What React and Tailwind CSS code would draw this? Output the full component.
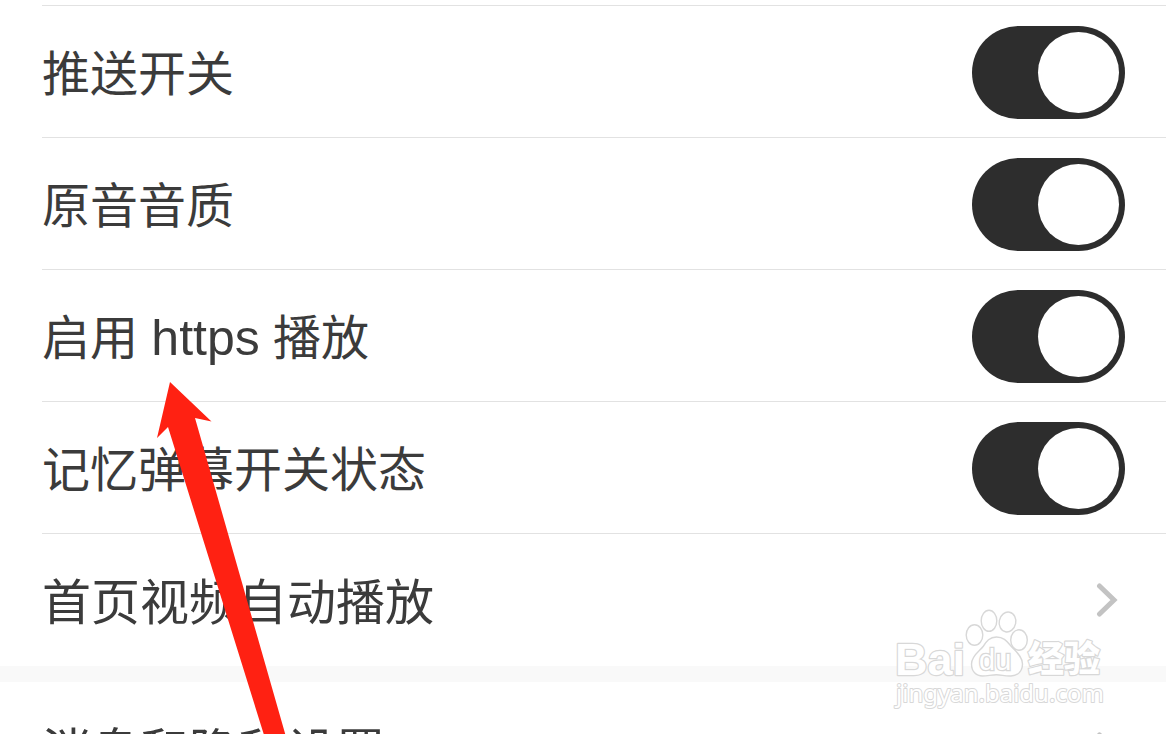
import { useState } from 'react';

const switches = [
  { id: 'push', label: '推送开关' },
  { id: 'quality', label: '原音音质' },
  { id: 'https', label: <>启用 <span className="text-[50px]">https</span> 播放</> },
  { id: 'danmaku', label: '记忆弹幕开关状态' },
];

function SwitchRow({ id, label }) {
  const [on, setOn] = useState(true);
  return (
    <li className="ml-[42px] flex items-center justify-between border-t border-[#e2e2e2] pt-5 pr-[41px] pb-[18px]">
      <label htmlFor={id} className="pt-1 leading-[64px] whitespace-nowrap">{label}</label>
      <input
        id={id}
        type="checkbox"
        role="switch"
        checked={on}
        onChange={(e) => setOn(e.target.checked)}
        className="flex h-[93px] w-[153px] shrink-0 cursor-pointer appearance-none items-center rounded-full bg-[#c8c8c8] p-1.5 before:block before:size-[81px] before:rounded-full before:bg-white checked:justify-end checked:bg-[#2d2d2d]"
      />
    </li>
  );
}

function LinkRow({ label, className }) {
  return (
    <a
      href="#"
      className={`${className} ml-[42px] flex h-[133px] items-center justify-between pr-12 text-[49px]`}
    >
      <span className="pt-1.5 leading-[64px] whitespace-nowrap">{label}</span>
      <svg className="h-9 w-[22px] shrink-0" viewBox="0 0 22 36" fill="none" aria-hidden="true">
        <path d="M3.500 4 18 18 3.500 32" stroke="#c3c3c3" strokeWidth="5" strokeLinecap="round" />
      </svg>
    </a>
  );
}

function Watermark() {
  return (
    <svg
      className="pointer-events-none absolute top-[604px] right-[58px] h-[110px] w-[220px]"
      viewBox="0 0 220 110"
      fill="#fff"
      stroke="#d8d8d8"
      strokeWidth="1.4"
      aria-hidden="true"
    >
      <g strokeWidth="2.4" paintOrder="stroke" strokeLinejoin="round">
        <text x="7" y="71" fontSize="45" fontWeight="700" fontFamily="Liberation Sans, Arial, sans-serif">Bai</text>
        <text x="140" y="68" fontSize="36" fontWeight="900" fontFamily="Noto Sans CJK SC, sans-serif">经验</text>
        <text x="8" y="98" fontSize="24" strokeWidth="2" fontFamily="Noto Sans, sans-serif">jingyan.baidu.com</text>
      </g>
      <ellipse cx="86.500" cy="31" rx="8.300" ry="10.300" />
      <ellipse cx="101" cy="16.800" rx="7.800" ry="10.500" />
      <ellipse cx="119.500" cy="18" rx="8.300" ry="10" transform="rotate(12 119.500 18)" />
      <ellipse cx="131" cy="36" rx="8.300" ry="10.200" />
      <path d="M108.500 33c-7 0-10 4.500-13 9-3.500 5-12 9.500-12 18 0 7.500 4.500 12 11 12 5 0 9-1.300 14-1.300s9 1.800 14.500 1.300c7-.6 11.500-5 11.500-12 0-8-7.500-13-12-18.500-4-5-7.500-8.500-14-8.500Z" />
      <text x="91" y="66" fontSize="29" strokeWidth="2.500" paintOrder="stroke" fontFamily="Liberation Sans, Arial, sans-serif">du</text>
    </svg>
  );
}

export default function App() {
  return (
    <main className="relative h-screen overflow-hidden bg-white pt-[5px] font-['Liberation_Sans','Noto_Sans_CJK_SC',sans-serif] text-[48px] text-[#3b3b3b]">
      <ul>
        {switches.map((s) => (
          <SwitchRow key={s.id} id={s.id} label={s.label} />
        ))}
      </ul>
      <LinkRow label="首页视频自动播放" className="border-t border-[#e2e2e2]" />
      <div className="h-4 bg-[#f9f9f9]" />
      <LinkRow label="消息和隐私设置" className="" />

      <Watermark />

      <svg
        className="pointer-events-none absolute top-[382px] left-[156px] h-[352px] w-[130px]"
        viewBox="0 0 130 352"
        fill="#ff2112"
        aria-hidden="true"
      >
        <path d="M14 0 55.500 39.500 39 36 129.500 353H108L12 45 1 56Z" />
      </svg>
    </main>
  );
}
